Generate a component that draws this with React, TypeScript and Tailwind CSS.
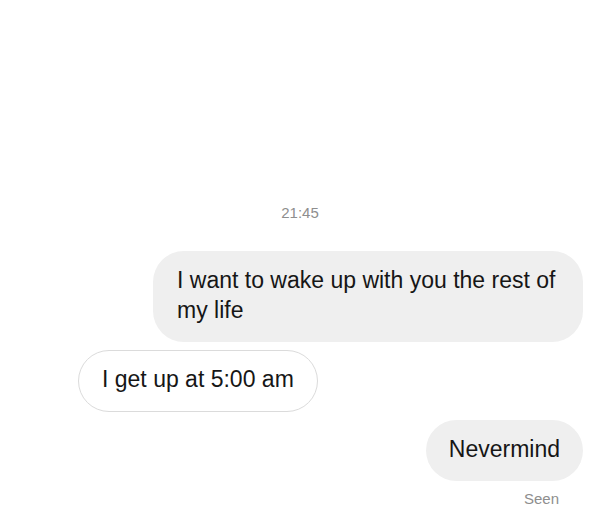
const font = { fontFamily: '"Liberation Sans", Arial, sans-serif' };

const Stamp = ({ text }: { text: string }) => {
  return <div className="text-center text-[15px] leading-[20px] text-[#8e8e8e]">{text}</div>;
};

const Mine = ({ text, width }: { text: string; width?: string }) => {
  return (
    <div className="flex justify-end pr-[17px]">
      <div
        className={`rounded-[31px] bg-[#efefef] pt-[14px] pb-[17px] text-[23px] leading-[30px] text-[#161616] ${width ?? "px-[23px]"}`}
      >
        {text}
      </div>
    </div>
  );
};

const Theirs = ({ text }: { text: string }) => {
  return (
    <div className="flex justify-start pl-[78px]">
      <div className="rounded-[31px] border border-[#dbdbdb] bg-white px-[23px] pt-[13px] pb-[17px] text-[23px] leading-[30px] text-[#161616]">
        {text}
      </div>
    </div>
  );
};

const App = () => {
  return (
    <div className="h-[523px] w-[600px] overflow-hidden bg-white pt-[203px]" style={font}>
      <Stamp text="21:45" />
      <div className="mt-[28px] flex flex-col gap-2">
        <Mine text="I want to wake up with you the rest of my life" width="w-[430px] px-6" />
        <Theirs text="I get up at 5:00 am" />
        <Mine text="Nevermind" />
      </div>
      <div className="mt-[8px] pr-[41px] text-right text-[15px] leading-[20px] text-[#8e8e8e]">Seen</div>
    </div>
  );
};

export default App;
